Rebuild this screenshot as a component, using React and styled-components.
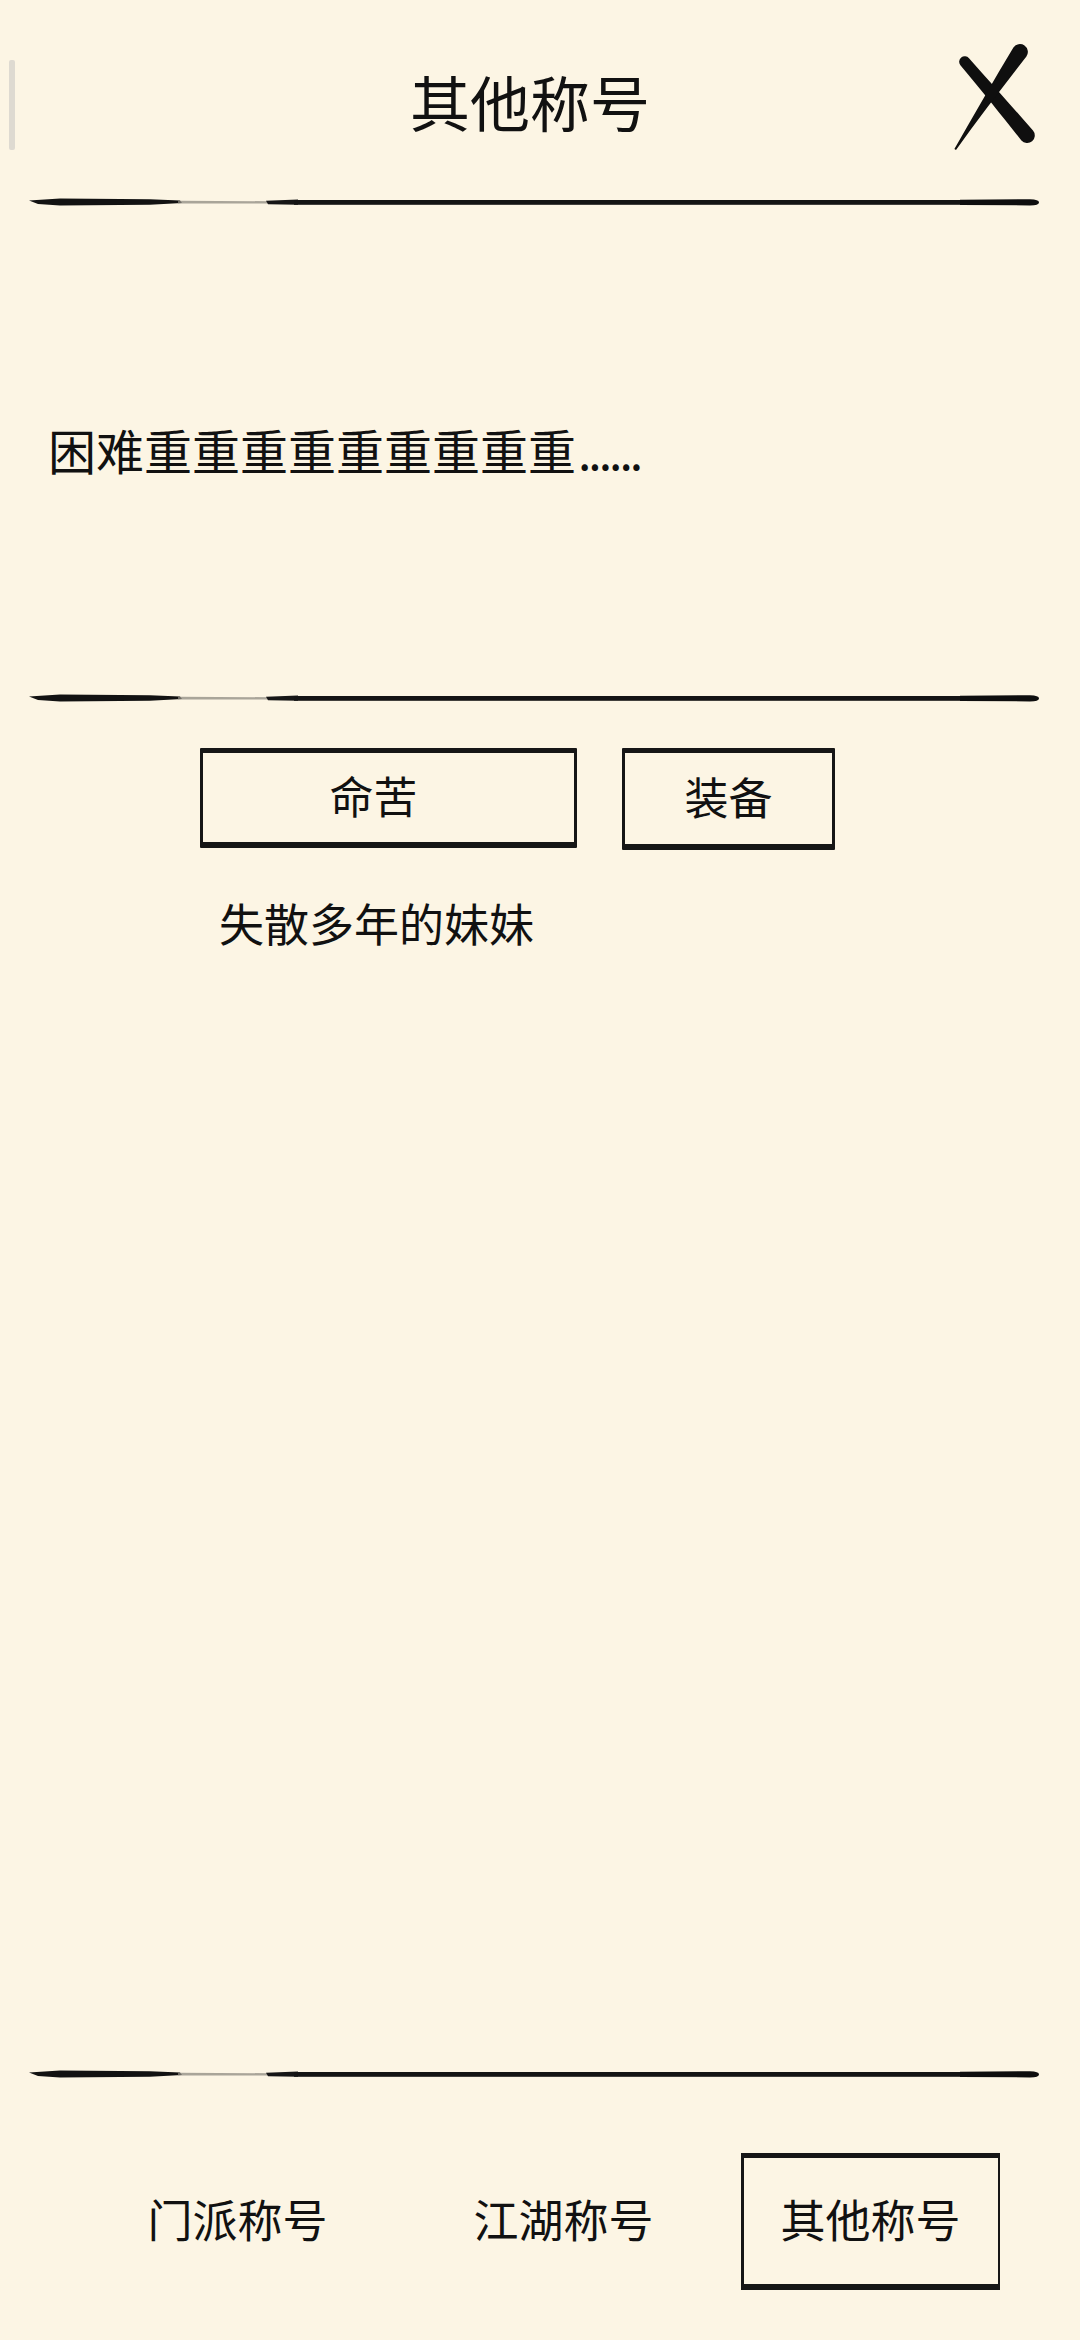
import React from "react";
import styled, { createGlobalStyle } from "styled-components";

const GlobalStyle = createGlobalStyle`
  html, body {
    margin: 0;
    padding: 0;
    background: #fcf5e4;
  }
  body {
    font-family: "Noto Sans CJK SC", "Noto Sans", sans-serif;
    color: #111;
  }
`;

const Page = styled.div`
  display: flex;
  flex-direction: column;
  width: 1080px;
  min-height: 100vh;
  background: #fcf5e4;
`;

const Header = styled.header`
  position: relative;
  display: grid;
  grid-template-columns: 1fr auto 1fr;
  align-items: center;
  height: 197px;
`;

const EdgeBar = styled.div`
  position: absolute;
  left: 9px;
  top: 60px;
  width: 6px;
  height: 90px;
  background: #dedad1;
  border-radius: 2px;
`;

const Title = styled.h1`
  grid-column: 2;
  margin: 0 20px 0 0;
  font-size: 60px;
  font-weight: 400;
  line-height: 1;
  padding-top: 4px;
`;

const CloseButton = styled.button`
  grid-column: 3;
  justify-self: end;
  margin-right: 45px;
  padding: 0;
  border: none;
  background: none;
  width: 85px;
  height: 110px;
  cursor: pointer;

  svg {
    display: block;
    filter: blur(0.6px);
  }
`;

const Stroke = styled.svg`
  display: block;
  width: 1080px;
  height: 10px;
  flex-shrink: 0;
  filter: blur(0.5px);
`;

const Description = styled.section`
  display: flex;
  align-items: center;
  height: 486px;
  padding-left: 48px;
  font-size: 48px;
  line-height: 1.2;
`;

const Dots = styled.span`
  letter-spacing: -3px;
  margin-left: 2px;
`;

const ActionRow = styled.div`
  display: flex;
  gap: 45px;
  padding-left: 200px;
  margin-top: 45px;
`;

const SketchBox = styled.button`
  box-sizing: border-box;
  display: flex;
  align-items: center;
  justify-content: center;
  width: ${(p) => p.$w}px;
  height: ${(p) => p.$h}px;
  padding: 0 ${(p) => p.$pr || 0}px 6px 0;
  background: transparent;
  color: #111;
  font-family: "Noto Sans CJK SC", sans-serif;
  font-size: 44px;
  border-style: solid;
  border-color: #161616;
  border-width: 5px 3px 6px 3px;
  border-radius: 1px;
  cursor: pointer;
`;

const Subtitle = styled.p`
  margin: 46px 0 0;
  padding-left: 219px;
  font-size: 45px;
  line-height: 1.2;
`;

const Spacer = styled.div`
  flex: 1;
`;

const TabBar = styled.nav`
  display: grid;
  grid-template-columns: 326px 326px 288px;
  align-items: start;
  padding: 74px 0 50px 74px;
  height: 137px;
`;

const Tab = styled.div`
  box-sizing: border-box;
  justify-self: center;
  display: flex;
  align-items: center;
  justify-content: center;
  width: 259px;
  height: 137px;
  padding-bottom: 6px;
  font-size: 45px;
  border-style: solid;
  border-color: ${(p) => (p.$active ? "#161616" : "transparent")};
  border-width: 5px 2px 6px 3px;
`;

// ink brush divider: pointed head, a dry gap, then a long even stroke
const BrushLine = () => (
  <Stroke viewBox="0 0 1080 10">
    <path d="M29 3.6 L60 1.6 L150 2.2 L180 3.6 L182 6 L150 7.8 L60 8.4 L38 7 Z" fill="#121212" />
    <path d="M178 3.8 L272 4.2 L272 6.6 L178 6.6 Z" fill="#8d8980" opacity="0.75" />
    <path d="M266 3.8 L298 2.6 L298 7.8 L268 7.2 Z" fill="#161616" />
    <rect x="294" y="3" width="738" height="4.8" fill="#141414" />
    <path d="M960 2.8 L1030 2.2 Q1039 2.4 1039 5.4 Q1039 8.4 1030 8.4 L960 8 Z" fill="#0e0e0e" />
  </Stroke>
);

const CloseMark = () => (
  <svg width="85" height="110" viewBox="0 0 85 110">
    <path
      d="M19 14.2 C40 38 60 60 83 86.6 A7.5 7.5 0 0 1 71.4 96.4 C52 72 33 48 10.4 21.2 A5 5 0 0 1 19 14.2 Z"
      fill="#0f0f0f"
    />
    <path
      d="M63.4 3.4 A7.6 7.6 0 0 1 76.4 12.6 C52 44 28 75 6 106 L4.4 105 C24 71 43 37 63.4 3.4 Z"
      fill="#0f0f0f"
    />
  </svg>
);

const tabs = ["门派称号", "江湖称号", "其他称号"];

export default function App() {
  return (
    <Page>
      <GlobalStyle />
      <Header>
        <EdgeBar />
        <Title>其他称号</Title>
        <CloseButton aria-label="关闭">
          <CloseMark />
        </CloseButton>
      </Header>
      <BrushLine />

      <Description>
        困难重重重重重重重重重<Dots>......</Dots>
      </Description>
      <BrushLine />

      <ActionRow>
        <SketchBox $w={377} $h={100} $pr={30}>命苦</SketchBox>
        <SketchBox $w={213} $h={102}>装备</SketchBox>
      </ActionRow>
      <Subtitle>失散多年的妹妹</Subtitle>

      <Spacer />
      <BrushLine />
      <TabBar>
        {tabs.map((t, i) => (
          <Tab key={t} $active={i === 2}>
            {t}
          </Tab>
        ))}
      </TabBar>
    </Page>
  );
}
